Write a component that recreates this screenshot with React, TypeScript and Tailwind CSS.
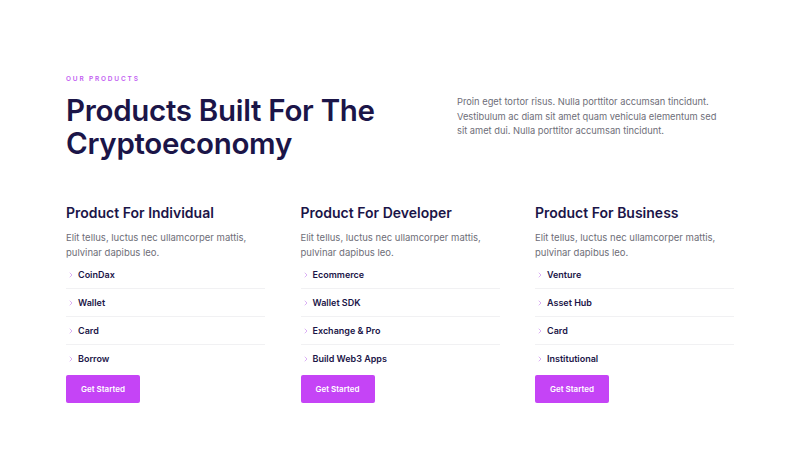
import { ChevronRight } from 'lucide-react';

const columns = [
  {
    title: 'Product For Individual',
    items: ['CoinDax', 'Wallet', 'Card', 'Borrow'],
  },
  {
    title: 'Product For Developer',
    items: ['Ecommerce', 'Wallet SDK', 'Exchange & Pro', 'Build Web3 Apps'],
  },
  {
    title: 'Product For Business',
    items: ['Venture', 'Asset Hub', 'Card', 'Institutional'],
  },
];

function ProductColumn({ title, items }: { title: string; items: string[] }) {
  return (
    <div className="w-[199px]">
      <h3 className="text-[14px] leading-[18px] font-semibold text-[#1b1548]">{title}</h3>
      <p className="mt-[8px] text-[9.5px] leading-[15px] text-[#6e6e78]">
        Elit tellus, luctus nec ullamcorper mattis, pulvinar dapibus leo.
      </p>
      <ul className="mt-[1px]">
        {items.map((item, i) => (
          <li
            key={item}
            className={`flex items-center h-[28px] ${i < items.length - 1 ? 'border-b border-[#f1f1f3]' : ''}`}
          >
            <ChevronRight className="w-[8px] h-[8px] text-[#c98af0] ml-[1px]" strokeWidth={2} />
            <span className="ml-[3px] text-[9px] font-semibold text-[#1b1548]">{item}</span>
          </li>
        ))}
      </ul>
      <button className="mt-[2px] w-[74px] h-[28px] rounded-[2px] bg-[#c544f6] text-white text-[8px] font-semibold">
        Get Started
      </button>
    </div>
  );
}

export default function App() {
  return (
    <div className="w-[800px] h-[476px] bg-white font-['Inter',sans-serif]">
      <div className="px-[66px] pt-[75px]">
        <div className="flex justify-between">
          <div>
            <p className="text-[6.5px] leading-[8px] tracking-[0.28em] font-semibold text-[#c25df2]">
              OUR PRODUCTS
            </p>
            <h1 className="mt-[11px] text-[29.5px] leading-[33px] font-semibold text-[#1b1548] tracking-[-0.01em]">
              Products Built For The
              <br />
              Cryptoeconomy
            </h1>
          </div>
          <p className="mt-[20px] w-[270px] mr-[7px] text-[9.3px] leading-[14.5px] text-[#6e6e78]">
            Proin eget tortor risus. Nulla porttitor accumsan tincidunt. Vestibulum ac diam sit amet quam
            vehicula elementum sed sit amet dui. Nulla porttitor accumsan tincidunt.
          </p>
        </div>
        <div className="mt-[44px] grid grid-cols-[199px_199px_199px] gap-x-[35.5px]">
          {columns.map((c) => (
            <ProductColumn key={c.title} title={c.title} items={c.items} />
          ))}
        </div>
      </div>
    </div>
  );
}
